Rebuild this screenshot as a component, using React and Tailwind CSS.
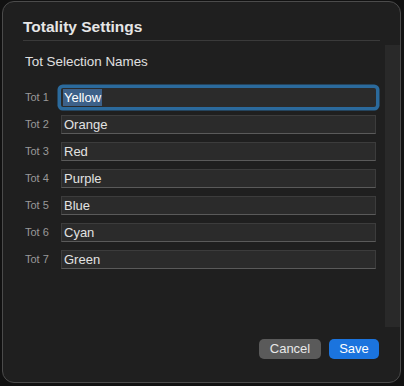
import React from 'react';

const names = ['Yellow', 'Orange', 'Red', 'Purple', 'Blue', 'Cyan', 'Green'];

const App = () => {
  return (
    <div
      className="w-[404px] h-[386px] bg-[#111111] pt-[1px] pl-[2px] overflow-hidden"
      style={{ fontFamily: '"Liberation Sans", Arial, sans-serif' }}
    >
      <div className="w-[399px] h-[382px] rounded-[12px] border border-[#4b4b4b] bg-[#1f1f1f] flex flex-col overflow-hidden">
        {/* header */}
        <div className="mx-[20px] h-[39px] flex items-end pb-[4px] border-b border-[#3a3a3a]">
          <h1 className="text-[15.5px] leading-[18px] font-bold text-[#e6e6e6]">Totality Settings</h1>
        </div>

        {/* body */}
        <div className="mt-[4px] h-[282px] flex">
          <div className="flex-1 pt-[9px]">
            <p className="pl-[22px] text-[13.4px] leading-[16px] text-[#e0e0e0]">Tot Selection Names</p>
            <div className="mt-[18px] flex flex-col gap-[8px]">
              {names.map((name, i) => (
                <div key={i} className="flex items-center pl-[22px]">
                  <span className="w-[36px] text-[11px] text-[#999999]">Tot {i + 1}</span>
                  {i === 0 ? (
                    <div className="w-[315px] h-[19px] bg-[#2b2b2b] rounded-[2px] ring-[3.5px] ring-[#2b6a9c] flex items-center pl-[2px]">
                      <span className="bg-[#3d6189] text-[13px] leading-[17px] text-white px-[1px]">{name}</span>
                    </div>
                  ) : (
                    <div className="w-[315px] h-[19px] bg-[#2b2b2b] border border-[#3c3c3c] border-b-[#5a5a5a] flex items-center pl-[2px]">
                      <span className="text-[13px] leading-[17px] text-[#e2e2e2]">{name}</span>
                    </div>
                  )}
                </div>
              ))}
            </div>
          </div>
          <div className="w-[15px] bg-[#292929]" />
        </div>

        {/* footer */}
        <div className="mt-[12px] flex justify-end gap-[8px] pr-[21px]">
          <button className="w-[62px] h-[20px] rounded-[5px] bg-[#5a5a5a] text-[13px] text-[#e8e8e8]">Cancel</button>
          <button className="w-[50px] h-[20px] rounded-[5px] bg-[#1b74de] text-[13px] text-white">Save</button>
        </div>
      </div>
    </div>
  );
};

export default App;
